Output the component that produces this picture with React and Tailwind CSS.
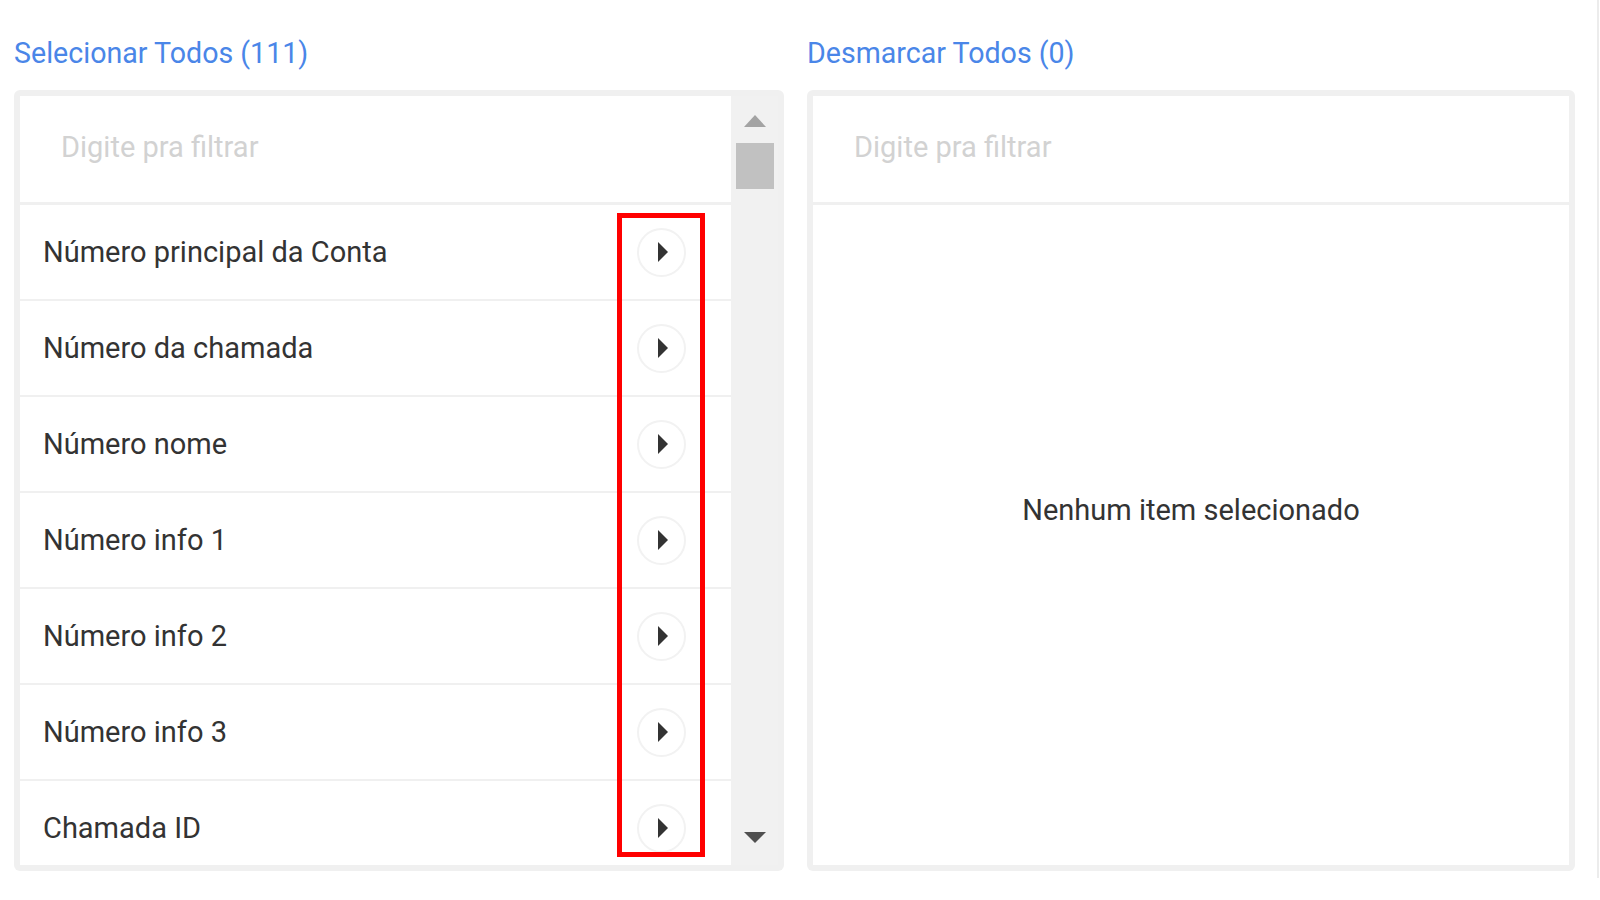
const ITEMS = [
  "Número principal da Conta",
  "Número da chamada",
  "Número nome",
  "Número info 1",
  "Número info 2",
  "Número info 3",
  "Chamada ID",
];

function PlayIcon() {
  return (
    <svg width="12" height="22" viewBox="0 0 12 22">
      <path d="M1 1 L11 11 L1 21 Z" fill="#333" />
    </svg>
  );
}

function FilterBox() {
  return (
    <div className="flex h-[109px] shrink-0 items-center border-b-[3px] border-[#f0f0f0] pb-[4px] pl-[41px] text-[29px] leading-[29px] text-[#d2d2d2]">
      Digite pra filtrar
    </div>
  );
}

function Scrollbar() {
  return (
    <div className="flex w-[47px] shrink-0 flex-col items-center bg-[#f1f1f1]">
      <svg className="mt-[19px]" width="22" height="12" viewBox="0 0 22 12">
        <path d="M0 12 L11 0 L22 12 Z" fill="#a3a3a3" />
      </svg>
      <div className="mt-[16px] h-[46px] w-[38px] bg-[#c1c1c1]" />
      <div className="flex-1" />
      <svg className="mb-[22px]" width="22" height="11" viewBox="0 0 22 11">
        <path d="M0 0 L22 0 L11 11 Z" fill="#505050" />
      </svg>
    </div>
  );
}

export default function App() {
  return (
    <div
      className="relative flex h-[900px] w-[1600px] overflow-hidden bg-white"
      style={{ fontFamily: "Roboto, 'Liberation Sans', sans-serif" }}
    >
      <div className="flex gap-[23px] pl-[14px] pt-[39px]">
        {/* LEFT */}
        <div className="flex w-[770px] flex-col">
          <div className="h-[29px] text-[28.6px] leading-[29px] text-[#4a86e8]">Selecionar Todos (111)</div>
          <div className="mt-[22px] flex h-[781px] rounded-[6px] bg-[#f0f0f0] p-[6px]">
            <div className="flex w-[711px] flex-col overflow-hidden bg-white">
              <FilterBox />
              {ITEMS.map((item) => (
                <div
                  key={item}
                  className="flex h-[96px] shrink-0 items-center justify-between border-b-2 border-[#f0f0f0] pl-[23px] pr-[45px] text-[29px] leading-[29px] text-[#333]"
                >
                  <span>{item}</span>
                  <div className="flex h-[49px] w-[49px] items-center justify-center rounded-full border-2 border-[#f2f2f2] pl-[2px]">
                    <PlayIcon />
                  </div>
                </div>
              ))}
            </div>
            <Scrollbar />
          </div>
        </div>

        {/* RIGHT */}
        <div className="flex w-[768px] flex-col">
          <div className="h-[29px] text-[28.6px] leading-[29px] text-[#4a86e8]">Desmarcar Todos (0)</div>
          <div className="mt-[22px] flex h-[781px] rounded-[6px] bg-[#f0f0f0] p-[6px]">
            <div className="flex flex-1 flex-col bg-white">
              <FilterBox />
              <div className="flex justify-center pt-[291px] text-[29px] leading-[29px] text-[#333]">
                Nenhum item selecionado
              </div>
            </div>
          </div>
        </div>
      </div>

      <div className="ml-auto mr-[1px] h-[878px] w-[2px] bg-[#ececec]" />

      {/* annotation */}
      <div className="absolute left-[617px] top-[213px] h-[644px] w-[88px] border-[5px] border-[#ff0000]" />
    </div>
  );
}
